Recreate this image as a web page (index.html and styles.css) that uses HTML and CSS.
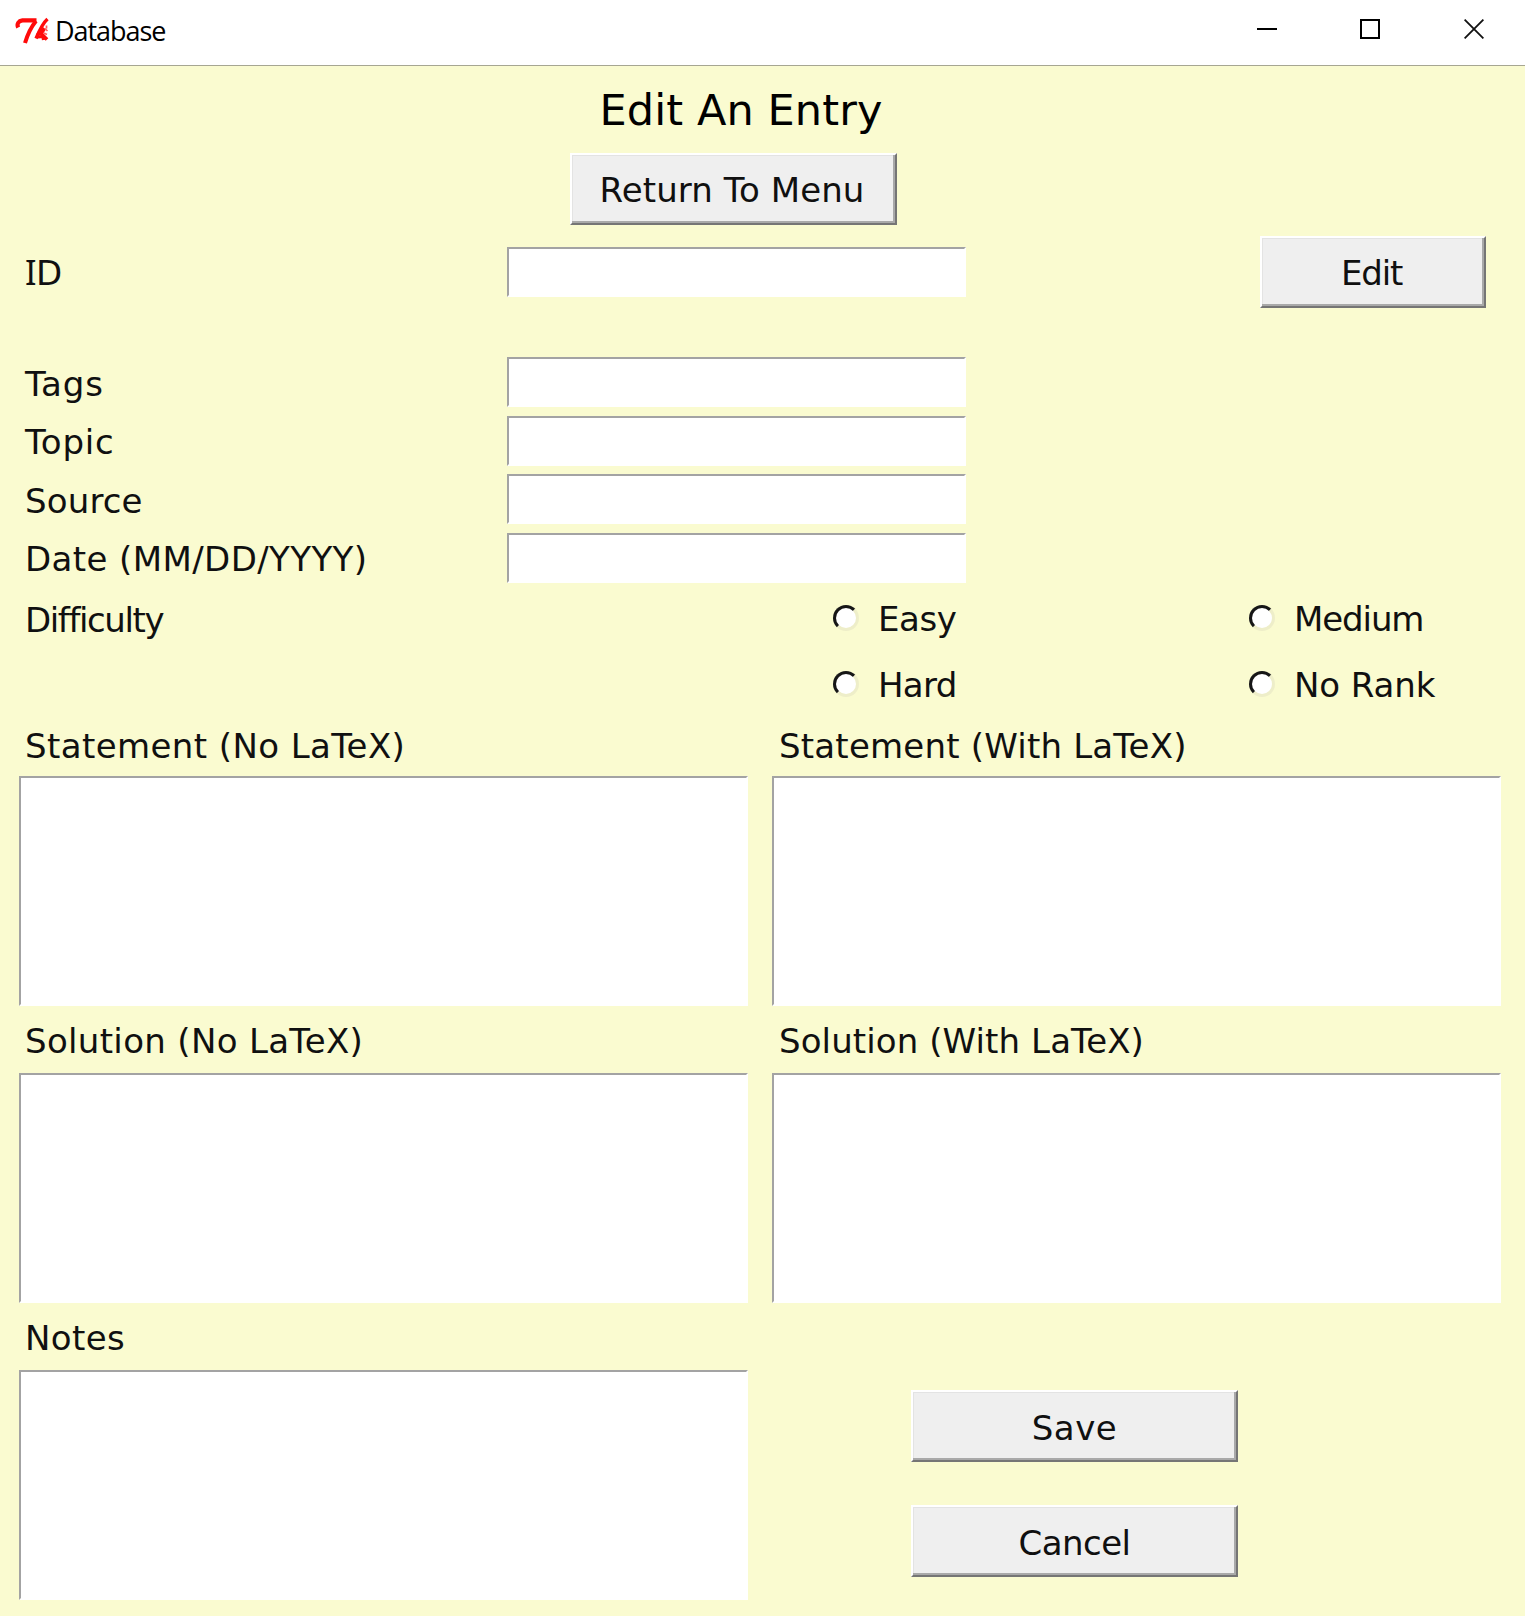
FILE: index.html
```
<!DOCTYPE html>
<html lang="en">
<head>
<meta charset="utf-8">
<title>Database</title>
<link rel="stylesheet" href="styles.css">
</head>
<body>
<header class="titlebar">
  <svg class="app-icon" width="34" height="28" viewBox="0 0 34 28" fill="none" stroke="#ff0a0a">
    <path d="M3.200 10.500C1.500 7 3.500 3.800 7.500 3.300H21.500" stroke-width="4.200"/>
    <path d="M21 4C16.500 9.500 13 16 10 26" stroke-width="4"/>
    <path d="M32.500 2C28.500 5.500 24.500 13 21 21.500" stroke-width="3.400"/>
    <path d="M22 18.500L29.500 11.500L26 16.500L32 22.500" stroke-width="3.600"/>
    <path d="M22.500 20L28 19.500L28.500 23" stroke-width="3.200"/>
    <path d="M30 11.500l2.500 2.500M31.500 8.500v3M29 16l3 1.500" stroke-width="1.700" stroke="#ff6060"/>
  </svg>
  <span class="app-name">Database</span>
  <nav class="window-controls">
    <svg width="20" height="20" viewBox="0 0 20 20"><path d="M0 10h20" stroke="#000" stroke-width="2"/></svg>
    <svg width="20" height="20" viewBox="0 0 20 20"><rect x="1" y="1" width="18" height="18" fill="none" stroke="#000" stroke-width="2"/></svg>
    <svg class="close" width="20" height="20" viewBox="0 0 20 20"><path d="M.6.600L19.400 19.400M19.400.600L.6 19.400" stroke="#111" stroke-width="1.800"/></svg>
  </nav>
</header>
<main>
  <section class="heading">
    <h1>Edit An Entry</h1>
    <button class="btn btn-wide return">Return To Menu</button>
  </section>

  <section class="row id-row">
    <label class="id-label"><span class="serif-i">I</span>D</label>
    <input class="entry" type="text">
    <button class="btn btn-edit">Edit</button>
  </section>

  <section class="fields">
    <div class="row"><label class="tags">Tags</label><input class="entry" type="text"></div>
    <div class="row"><label class="topic">Topic</label><input class="entry" type="text"></div>
    <div class="row"><label class="source">Source</label><input class="entry" type="text"></div>
    <div class="row"><label class="date">Date (MM/DD/YYYY)</label><input class="entry" type="text"></div>
  </section>

  <section class="difficulty">
    <span class="difficulty-label">Difficulty</span>
    <div class="options">
      <label class="option easy"><i class="radio"></i><span>Easy</span></label>
      <label class="option medium"><i class="radio"></i><span>Medium</span></label>
      <label class="option hard"><i class="radio"></i><span>Hard</span></label>
      <label class="option rank"><i class="radio"></i><span>No Rank</span></label>
    </div>
  </section>

  <section class="panes">
    <div class="pane statement"><label class="st-no">Statement (No LaTeX)</label><textarea></textarea></div>
    <div class="pane statement"><label class="st-with">Statement (With LaTeX)</label><textarea></textarea></div>
    <div class="pane solution"><label class="so-no">Solution (No LaTeX)</label><textarea></textarea></div>
    <div class="pane solution"><label class="so-with">Solution (With LaTeX)</label><textarea></textarea></div>
    <div class="pane notes"><label class="notes-label">Notes</label><textarea></textarea></div>
    <div class="actions">
      <button class="btn btn-wide save">Save</button>
      <button class="btn btn-wide cancel">Cancel</button>
    </div>
  </section>
</main>
</body>
</html>
```
FILE: styles.css
```
* { box-sizing: border-box; }
body {
  margin: 0;
  width: 1525px;
  height: 1616px;
  overflow: hidden;
  background: #fafbd0;
  color: #101010;
  font: 34px/40px "DejaVu Sans", Verdana, sans-serif;
  white-space: nowrap;
}

/* Title bar */
.titlebar {
  display: flex;
  align-items: flex-start;
  height: 66px;
  padding-left: 15px;
  background: #fff;
  border-bottom: 1px solid #a6a692;
  color: #000;
}
.app-icon { margin-top: 17px; }
.app-name {
  margin: 12px 0 0 6px;
  font: 27px/37px "Open Sans", "Noto Sans", sans-serif;
  letter-spacing: -1.05px;
}
.window-controls {
  display: flex;
  gap: 83px;
  margin: 19px 41px 0 auto;
}
.window-controls svg { display: block; }
.window-controls .close { margin-left: 1px; }

/* Heading */
.heading {
  display: flex;
  flex-direction: column;
  align-items: center;
  width: 1466px;
}
h1 {
  height: 87px;
  margin: 0 0 0 16px;
  font-size: 43px;
  font-weight: normal;
  line-height: 88px;
  letter-spacing: 0.1px;
  color: #000;
}

/* Buttons and entries */
.btn {
  height: 72px;
  padding: 1px 0 0;
  border: 2px solid;
  border-color: #fff #757575 #757575 #fff;
  border-radius: 0;
  background: #efefef;
  box-shadow: inset -2px -2px 0 #a9a9a9, inset 1px 1px 0 #e3e3e3;
  color: inherit;
  font: inherit;
}
.btn-wide { width: 327px; }
.btn-edit { width: 226px; margin-left: 294px; padding: 1px 3px 0 0; letter-spacing: -1.17px; }
.return { padding-right: 2px; letter-spacing: 0.1px; }
.save { padding-top: 4px; letter-spacing: 0.49px; }
.cancel { padding-top: 4px; letter-spacing: -0.55px; }

.entry {
  width: 459px;
  height: 50px;
  padding: 0 4px;
}
.entry, textarea {
  display: block;
  margin: 0;
  border: 2px solid;
  border-color: #a3a3a3 #fff #fff #a3a3a3;
  border-radius: 0;
  background: #fff;
  font: inherit;
  outline: 0;
}

.row {
  display: grid;
  grid-template-columns: 482px 459px auto;
  justify-content: start;
  align-items: center;
  padding-left: 25px;
}
.row label { padding-top: 3px; }
.row .id-label { padding-top: 2px; }
.id-row { height: 72px; margin-top: 11px; }
.serif-i { font-family: "Noto Sans", sans-serif; line-height: 1; letter-spacing: -0.5px; }

.fields {
  display: grid;
  row-gap: 8.5px;
  margin-top: 49px;
}
.tags { letter-spacing: 0.9px; }
.topic { letter-spacing: 0.8px; }
.source { letter-spacing: 0.15px; }
.date { letter-spacing: 0.4px; }

/* Difficulty */
.difficulty {
  display: grid;
  grid-template-columns: 808px auto;
  justify-content: start;
  margin-top: 2px;
  padding-left: 25px;
}
.difficulty-label { line-height: 70px; letter-spacing: -1.4px; }
.options {
  display: grid;
  grid-template-columns: 416px auto;
  grid-auto-rows: 66px;
}
.option { display: flex; align-items: center; }
.option span { padding-top: 3px; }
.radio {
  width: 26px;
  height: 26px;
  margin-right: 19px;
  border: 3px solid;
  border-color: #161616 #eeeec9 #eeeec9 #161616;
  border-radius: 50%;
  background: #fff;
}
.easy { letter-spacing: -0.4px; }
.hard { letter-spacing: -0.7px; }
.medium { letter-spacing: -1.1px; }
.rank { letter-spacing: -0.1px; }

/* Text panes */
.panes {
  display: grid;
  grid-template-columns: 729px 729px;
  column-gap: 24px;
  grid-template-rows: 289px 297px 297px;
  margin-left: 19px;
}
.pane { display: flex; flex-direction: column; }
.pane label { display: block; padding-left: 6px; }
.pane textarea { width: 729px; height: 230px; resize: none; }
.statement label { height: 59px; line-height: 58px; }
.solution label, .notes label { height: 67px; line-height: 70px; }
.st-no { letter-spacing: 0.4px; }
.st-with { letter-spacing: 0.2px; }
.so-no { letter-spacing: 0.33px; }
.so-with { letter-spacing: 0.1px; }
.notes-label { letter-spacing: 0.4px; }
.pane .st-with, .pane .so-with { padding-left: 7px; }

.actions {
  display: flex;
  flex-direction: column;
  gap: 43px;
  padding: 87px 0 0 139px;
}
```
